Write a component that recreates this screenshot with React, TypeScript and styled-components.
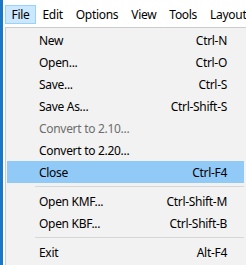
import React from "react";
import styled, { createGlobalStyle } from "styled-components";

const Global = createGlobalStyle`
  html, body { margin: 0; padding: 0; background: #ffffff; overflow: hidden; }
  body { font-family: "Noto Sans", "Open Sans", sans-serif; font-size: 12px; letter-spacing: -0.3px; color: #000; }
`;

const Window = styled.div`
  display: flex;
  width: 246px;
  height: 265px;
  overflow: hidden;
`;

const Edge = styled.div`
  width: 3px;
  flex: none;
  background: #1a78c8;
`;

const Main = styled.div`
  flex: 1;
  display: flex;
  flex-direction: column;
  background: #ffffff;
  min-width: 0;
`;

const MenuBar = styled.div`
  display: flex;
  align-items: center;
  height: 27px;
  padding: 0 0 0 2px;
  box-sizing: border-box;
  white-space: nowrap;
`;

const BarItem = styled.div<{ $active?: boolean }>`
  height: 19px;
  margin-top: 2px;
  padding: 0 5.5px;
  display: flex;
  align-items: center;
  box-sizing: border-box;
  border: 1px solid ${(p) => (p.$active ? "#99d1ff" : "transparent")};
  background: ${(p) => (p.$active ? "#cce8ff" : "transparent")};
`;

const Dropdown = styled.div`
  margin-left: 2px;
  border: 1px solid #cccccc;
  border-right: none;
  border-bottom: none;
  background: #f2f2f2;
  padding: 1px 2px 0 1px;
  flex: 1;
`;

const Item = styled.div<{ $hover?: boolean; $disabled?: boolean }>`
  display: flex;
  align-items: center;
  justify-content: space-between;
  height: 22px;
  padding: 0 17px 0 32px;
  color: ${(p) => (p.$disabled ? "#6d6d6d" : "#000")};
  background: ${(p) => (p.$hover ? "#91c9f7" : "transparent")};
`;

const Shortcut = styled.span``;

const Separator = styled.div`
  height: 7px;
  display: flex;
  align-items: center;
  padding-left: 28px;
  &::after {
    content: "";
    flex: 1;
    height: 1px;
    background: #d7d7d7;
  }
`;

type Entry =
  | { sep: true }
  | { label: string; key?: string; disabled?: boolean; hover?: boolean; sep?: false };

const entries: Entry[] = [
  { label: "New", key: "Ctrl-N" },
  { label: "Open...", key: "Ctrl-O" },
  { label: "Save...", key: "Ctrl-S" },
  { label: "Save As...", key: "Ctrl-Shift-S" },
  { label: "Convert to 2.10...", disabled: true },
  { label: "Convert to 2.20..." },
  { label: "Close", key: "Ctrl-F4", hover: true },
  { sep: true },
  { label: "Open KMF...", key: "Ctrl-Shift-M" },
  { label: "Open KBF...", key: "Ctrl-Shift-B" },
  { sep: true },
  { label: "Exit", key: "Alt-F4" },
];

export default function App() {
  return (
    <>
      <Global />
      <Window>
        <Edge />
        <Main>
          <MenuBar>
            <BarItem $active>File</BarItem>
            <BarItem>Edit</BarItem>
            <BarItem>Options</BarItem>
            <BarItem>View</BarItem>
            <BarItem>Tools</BarItem>
            <BarItem>Layout</BarItem>
          </MenuBar>
          <Dropdown>
            {entries.map((e, i) =>
              e.sep ? (
                <Separator key={i} />
              ) : (
                <Item key={i} $hover={e.hover} $disabled={e.disabled}>
                  <span>{e.label}</span>
                  {e.key && <Shortcut>{e.key}</Shortcut>}
                </Item>
              )
            )}
          </Dropdown>
        </Main>
      </Window>
    </>
  );
}
